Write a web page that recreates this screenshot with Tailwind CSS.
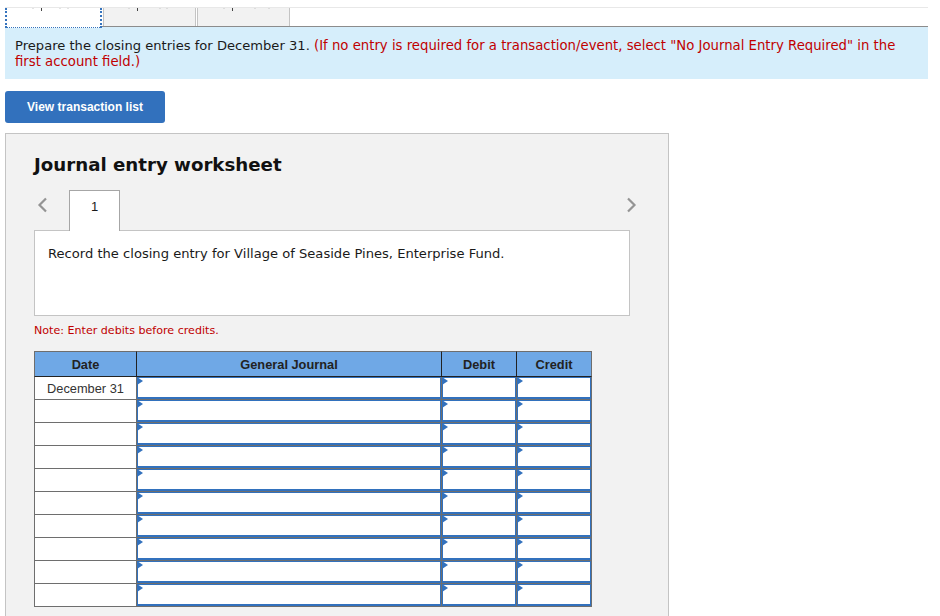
<!DOCTYPE html>
<html lang="en">

<head>
    <meta charset="UTF-8">
    <title>Journal entry worksheet</title>
    <script src="https://cdn.jsdelivr.net/npm/@tailwindcss/browser@4"></script>
</head>

<body class="bg-white h-[616px] w-[940px] overflow-hidden font-['DejaVu_Sans',sans-serif] text-[#1a1a1a]">

    <div class="h-[7px]"></div>
    <div class="h-[20px] ml-[5px] w-[923px] flex border-t border-t-[#e8e8e8] border-b border-b-[#8c8c8c]">
        <div class="relative w-[97px] h-[20px] bg-white border-x-2 border-b border-dotted border-[#3573bd]">
            <span class="absolute left-[34px] top-0 w-px h-[3px] bg-[#444]"></span>
            <span class="absolute left-[25px] top-0 w-[2px] h-px bg-[#e4e4e4]"></span>
            <span class="absolute left-[52px] top-0 w-[2px] h-px bg-[#e4e4e4]"></span>
            <span class="absolute left-[60px] top-0 w-[2px] h-px bg-[#e4e4e4]"></span>
        </div>
        <div class="relative w-[93px] ml-px bg-[#f2f2f2] border-r border-l border-[#c4c4c4]">
            <span class="absolute left-[33px] top-0 w-px h-[3px] bg-[#444]"></span>
            <span class="absolute left-[24px] top-0 w-[2px] h-px bg-[#dcdcdc]"></span>
            <span class="absolute left-[55px] top-0 w-[2px] h-px bg-[#dcdcdc]"></span>
            <span class="absolute left-[62px] top-0 w-[2px] h-px bg-[#dcdcdc]"></span>
        </div>
        <div class="relative w-[93px] ml-[1px] bg-[#f2f2f2] border-x border-[#c4c4c4]">
            <span class="absolute left-[34px] top-0 w-px h-[3px] bg-[#444]"></span>
            <span class="absolute left-[25px] top-0 w-[2px] h-px bg-[#dcdcdc]"></span>
            <span class="absolute left-[56px] top-0 w-[2px] h-px bg-[#dcdcdc]"></span>
            <span class="absolute left-[70px] top-0 w-[2px] h-px bg-[#dcdcdc]"></span>
        </div>
    </div>

    <div class="ml-[5px] w-[923px] h-[52px] bg-[#d6eefb] pl-[10px] pr-[20px] pt-[11px] text-[13.1px] leading-[16px]">
        Prepare the closing entries for December 31. <span class="text-[13.25px] text-[#c00000]">(If no entry is required for a transaction/event, select "No Journal Entry Required" in the first account field.)</span>
    </div>

    <button class="block ml-[5px] mt-[12px] w-[160px] h-[32px] bg-[#3271bd] rounded-[3px] text-white text-[12px] font-bold font-['Liberation_Sans',sans-serif]">View transaction list</button>

    <div class="ml-[5px] mt-[10px] w-[664px] h-[500px] bg-[#f2f2f2] border border-[#c4c4c4] pl-[28px]">
        <h2 class="mt-[18px] text-[18.2px] leading-[26px] font-bold text-[#111]">Journal entry worksheet</h2>

        <div class="mt-[12px] h-[41px] w-[596px] flex items-start relative">
            <svg class="mt-[7px] ml-[3px]" width="11" height="16" viewBox="0 0 11 16" fill="none" stroke="#949494" stroke-width="2.2"><path d="M9 1.5 2.5 8 9 14.5" /></svg>
            <div class="ml-[21px] w-[51px] h-[41px] bg-white border border-b-0 border-[#a6a6a6] text-[13px] text-center pt-[6px] font-['Liberation_Sans',sans-serif] z-10">1</div>
            <svg class="absolute left-[592px] top-[7px]" width="11" height="16" viewBox="0 0 11 16" fill="none" stroke="#949494" stroke-width="2.2"><path d="M2 1.5 8.5 8 2 14.5" /></svg>
        </div>

        <div class="w-[596px] h-[86px] bg-white border border-[#c4c4c4] -mt-px pl-[13px] pt-[15px] text-[13.1px] leading-[16px]">
            Record the closing entry for Village of Seaside Pines, Enterprise Fund.
        </div>

        <p class="mt-[8px] text-[11.1px] leading-[14px] text-[#c00000]">Note: Enter debits before credits.</p>

        <table class="mt-[13px] w-[558px] table-fixed border-separate border-spacing-0 font-['Liberation_Sans',sans-serif] text-[12.8px]">
            <thead>
                <tr class="h-[26px] bg-[#6fa8e6] text-[#222] font-bold">
                    <th class="w-[103px] border-t border-l border-t-[#6e6e6e] border-l-[#6e6e6e] border-r border-b border-r-[#222] border-b-[#222] p-0 pt-px">Date</th>
                    <th class="w-[305px] border-t border-t-[#6e6e6e] border-r border-b border-r-[#222] border-b-[#222] p-0 pt-px">General Journal</th>
                    <th class="w-[75px] border-t border-t-[#6e6e6e] border-r border-b border-r-[#222] border-b-[#222] p-0 pt-px">Debit</th>
                    <th class="w-[75px] border-t border-t-[#6e6e6e] border-r border-b border-r-[#6e6e6e] border-b-[#222] p-0 pt-px">Credit</th>
                </tr>
            </thead>
            <tbody id="rows" class="bg-white">
                <tr class="h-[23px]"><td class="border-l border-r border-b border-[#6e6e6e] text-center p-0 pt-px text-[#333]">December 31</td>
                    <td class="border-r border-b border-[#6e6e6e] p-0"><div class="relative h-[22px] border border-b-2 border-[#3271bd]"><span class="absolute -left-px -top-px border-y-[4px] border-y-transparent border-l-[6px] border-l-[#3271bd]"></span></div></td>
                    <td class="border-r border-b border-[#6e6e6e] p-0"><div class="relative h-[22px] border border-b-2 border-[#3271bd]"><span class="absolute -left-px -top-px border-y-[4px] border-y-transparent border-l-[6px] border-l-[#3271bd]"></span></div></td>
                    <td class="border-r border-b border-[#6e6e6e] p-0"><div class="relative h-[22px] border border-b-2 border-[#3271bd]"><span class="absolute -left-px -top-px border-y-[4px] border-y-transparent border-l-[6px] border-l-[#3271bd]"></span></div></td></tr>
            </tbody>
        </table>
    </div>

    <script>
        // the remaining nine rows are the same as the first, only without the date
        const tbody = document.getElementById('rows');
        for (let i = 0; i < 9; i++) {
            const row = tbody.rows[0].cloneNode(true);
            row.cells[0].textContent = '';
            tbody.appendChild(row);
        }
    </script>
</body>

</html>
